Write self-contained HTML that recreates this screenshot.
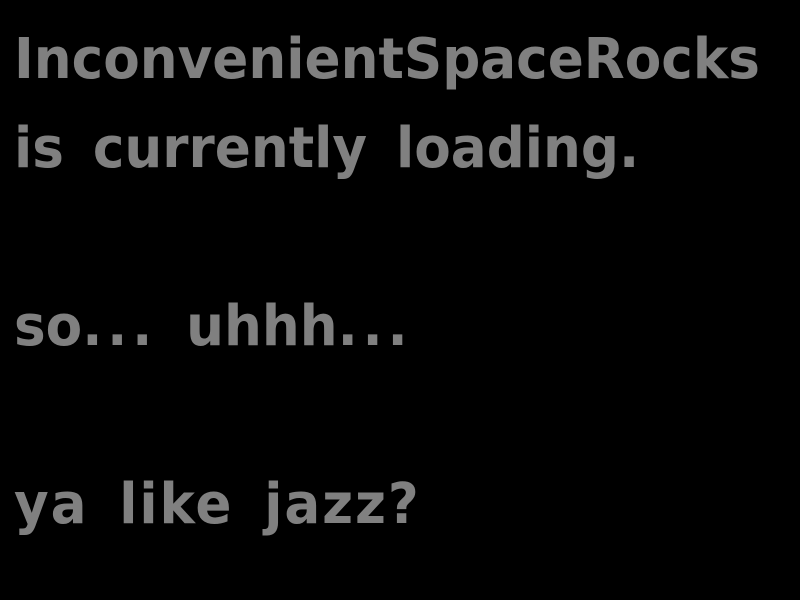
<!DOCTYPE html>
<html><head><meta charset="utf-8"><style>
html,body{margin:0;padding:0;background:#000;width:800px;height:600px;overflow:hidden}
.t{position:absolute;left:14px;top:15px;color:#808080;font-family:"DejaVu Sans","Liberation Sans",sans-serif;font-weight:bold;font-size:56px;line-height:89px;white-space:pre;word-spacing:11px;transform:scaleX(0.95);transform-origin:0 0}
.d{letter-spacing:5px}
.j{letter-spacing:2px}
</style></head><body>
<div class="t">InconvenientSpaceRocks
is currently loading.

so<span class="d">...</span> uhhh<span class="d">...</span>

<span class="j">ya like jazz?</span></div>
</body></html>
